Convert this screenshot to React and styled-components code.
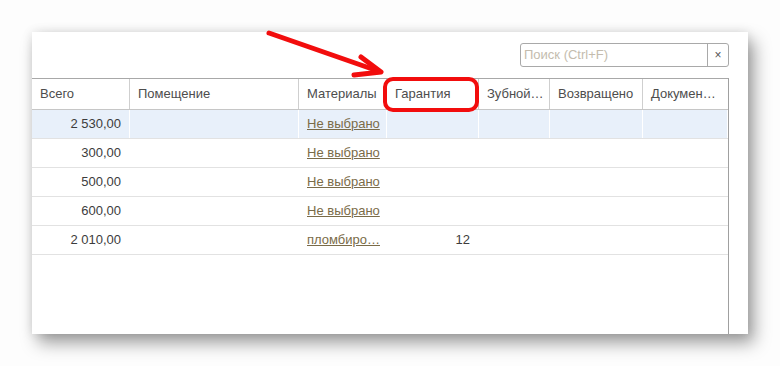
import React from 'react';
import styled, { createGlobalStyle } from 'styled-components';

const GlobalStyle = createGlobalStyle`
  html, body {
    margin: 0;
    padding: 0;
    background: #fdfdfd;
    font-family: "Liberation Sans", Arial, sans-serif;
  }
`;

const Page = styled.div`
  position: relative;
  width: 780px;
  height: 366px;
  padding: 32px 0 0 32px;
  box-sizing: border-box;
`;

const Card = styled.div`
  width: 716px;
  height: 302px;
  background: #fff;
  box-shadow: 6px 9px 16px rgba(0, 0, 0, 0.38), 0 0 10px rgba(0, 0, 0, 0.1);
  padding-right: 19px;
  box-sizing: border-box;
  display: flex;
  flex-direction: column;
`;

const Toolbar = styled.div`
  height: 46px;
  display: flex;
  align-items: center;
  justify-content: flex-end;
`;

const Search = styled.div`
  width: 209px;
  height: 24px;
  box-sizing: border-box;
  border: 1px solid #a9a9a9;
  border-radius: 3px;
  display: flex;
  font-size: 13px;
`;

const SearchText = styled.div`
  flex: 1;
  padding-left: 3px;
  line-height: 22px;
  color: #c4bcae;
`;

const Clear = styled.div`
  width: 20px;
  border-left: 1px solid #a9a9a9;
  display: flex;
  align-items: center;
  justify-content: center;
  color: #555;
  font-size: 12px;
`;

const Table = styled.div`
  flex: 1;
  border-top: 1px solid #a8a8a8;
  border-right: 1px solid #a0a0a0;
  font-size: 13px;
  color: #4a4a4a;
`;

const Row = styled.div`
  display: grid;
  grid-template-columns: 98px 169px 88px 92px 71px 93px 85px;
  height: ${({ $head }) => ($head ? 31 : 29)}px;
  box-sizing: border-box;
  border-bottom: 1px solid ${({ $head }) => ($head ? '#c6c6c6' : '#e2e2e2')};
  background: ${({ $selected }) => ($selected ? '#e8f0fa' : '#fff')};
`;

const HeadCell = styled.div`
  border-right: 1px solid ${({ $last }) => ($last ? 'transparent' : '#cfcfcf')};
  padding: 0 4px 0 8px;
  line-height: 30px;
  white-space: nowrap;
  overflow: hidden;
  color: #4d4d4d;
`;

const Cell = styled.div`
  border-right: 1px solid #fff;
  padding: 0 8px;
  line-height: 28px;
  white-space: nowrap;
  overflow: hidden;
  text-align: ${({ $right }) => ($right ? 'right' : 'left')};
  color: #3c3c3c;
`;

const LinkCell = styled(Cell)`
  padding: 0 0 0 8px;
  color: #7a6b48;
  text-decoration: underline;
`;

const Overlay = styled.svg`
  position: absolute;
  left: 0;
  top: 0;
  pointer-events: none;
`;

const columns = ['Всего', 'Помещение', 'Материалы', 'Гарантия', 'Зубной…', 'Возвращено', 'Докумен…'];

const rows = [
  { total: '2 530,00', mat: 'Не выбрано', selected: true },
  { total: '300,00', mat: 'Не выбрано' },
  { total: '500,00', mat: 'Не выбрано' },
  { total: '600,00', mat: 'Не выбрано' },
  { total: '2 010,00', mat: 'пломбиро…', warranty: '12' },
];

export default function App() {
  return (
    <Page>
      <GlobalStyle />
      <Card>
        <Toolbar>
          <Search>
            <SearchText>Поиск (Ctrl+F)</SearchText>
            <Clear>×</Clear>
          </Search>
        </Toolbar>
        <Table>
          <Row $head>
            {columns.map((c, i) => (
              <HeadCell key={c} $last={i === columns.length - 1}>{c}</HeadCell>
            ))}
          </Row>
          {rows.map((r, i) => (
            <Row key={i} $selected={r.selected}>
              <Cell $right>{r.total}</Cell>
              <Cell />
              <LinkCell>{r.mat}</LinkCell>
              <Cell $right>{r.warranty}</Cell>
              <Cell />
              <Cell />
              <Cell />
            </Row>
          ))}
        </Table>
      </Card>
      <Overlay width="780" height="366" viewBox="0 0 780 366">
        <g stroke="#f20d0d" fill="none" strokeLinecap="round" strokeLinejoin="round">
          <line x1="269" y1="33" x2="378" y2="71" strokeWidth="5" />
          <polyline points="361,57 381,72 354,75" strokeWidth="5" />
          <rect x="385" y="79" width="92" height="31" rx="8" strokeWidth="4" />
        </g>
      </Overlay>
    </Page>
  );
}
